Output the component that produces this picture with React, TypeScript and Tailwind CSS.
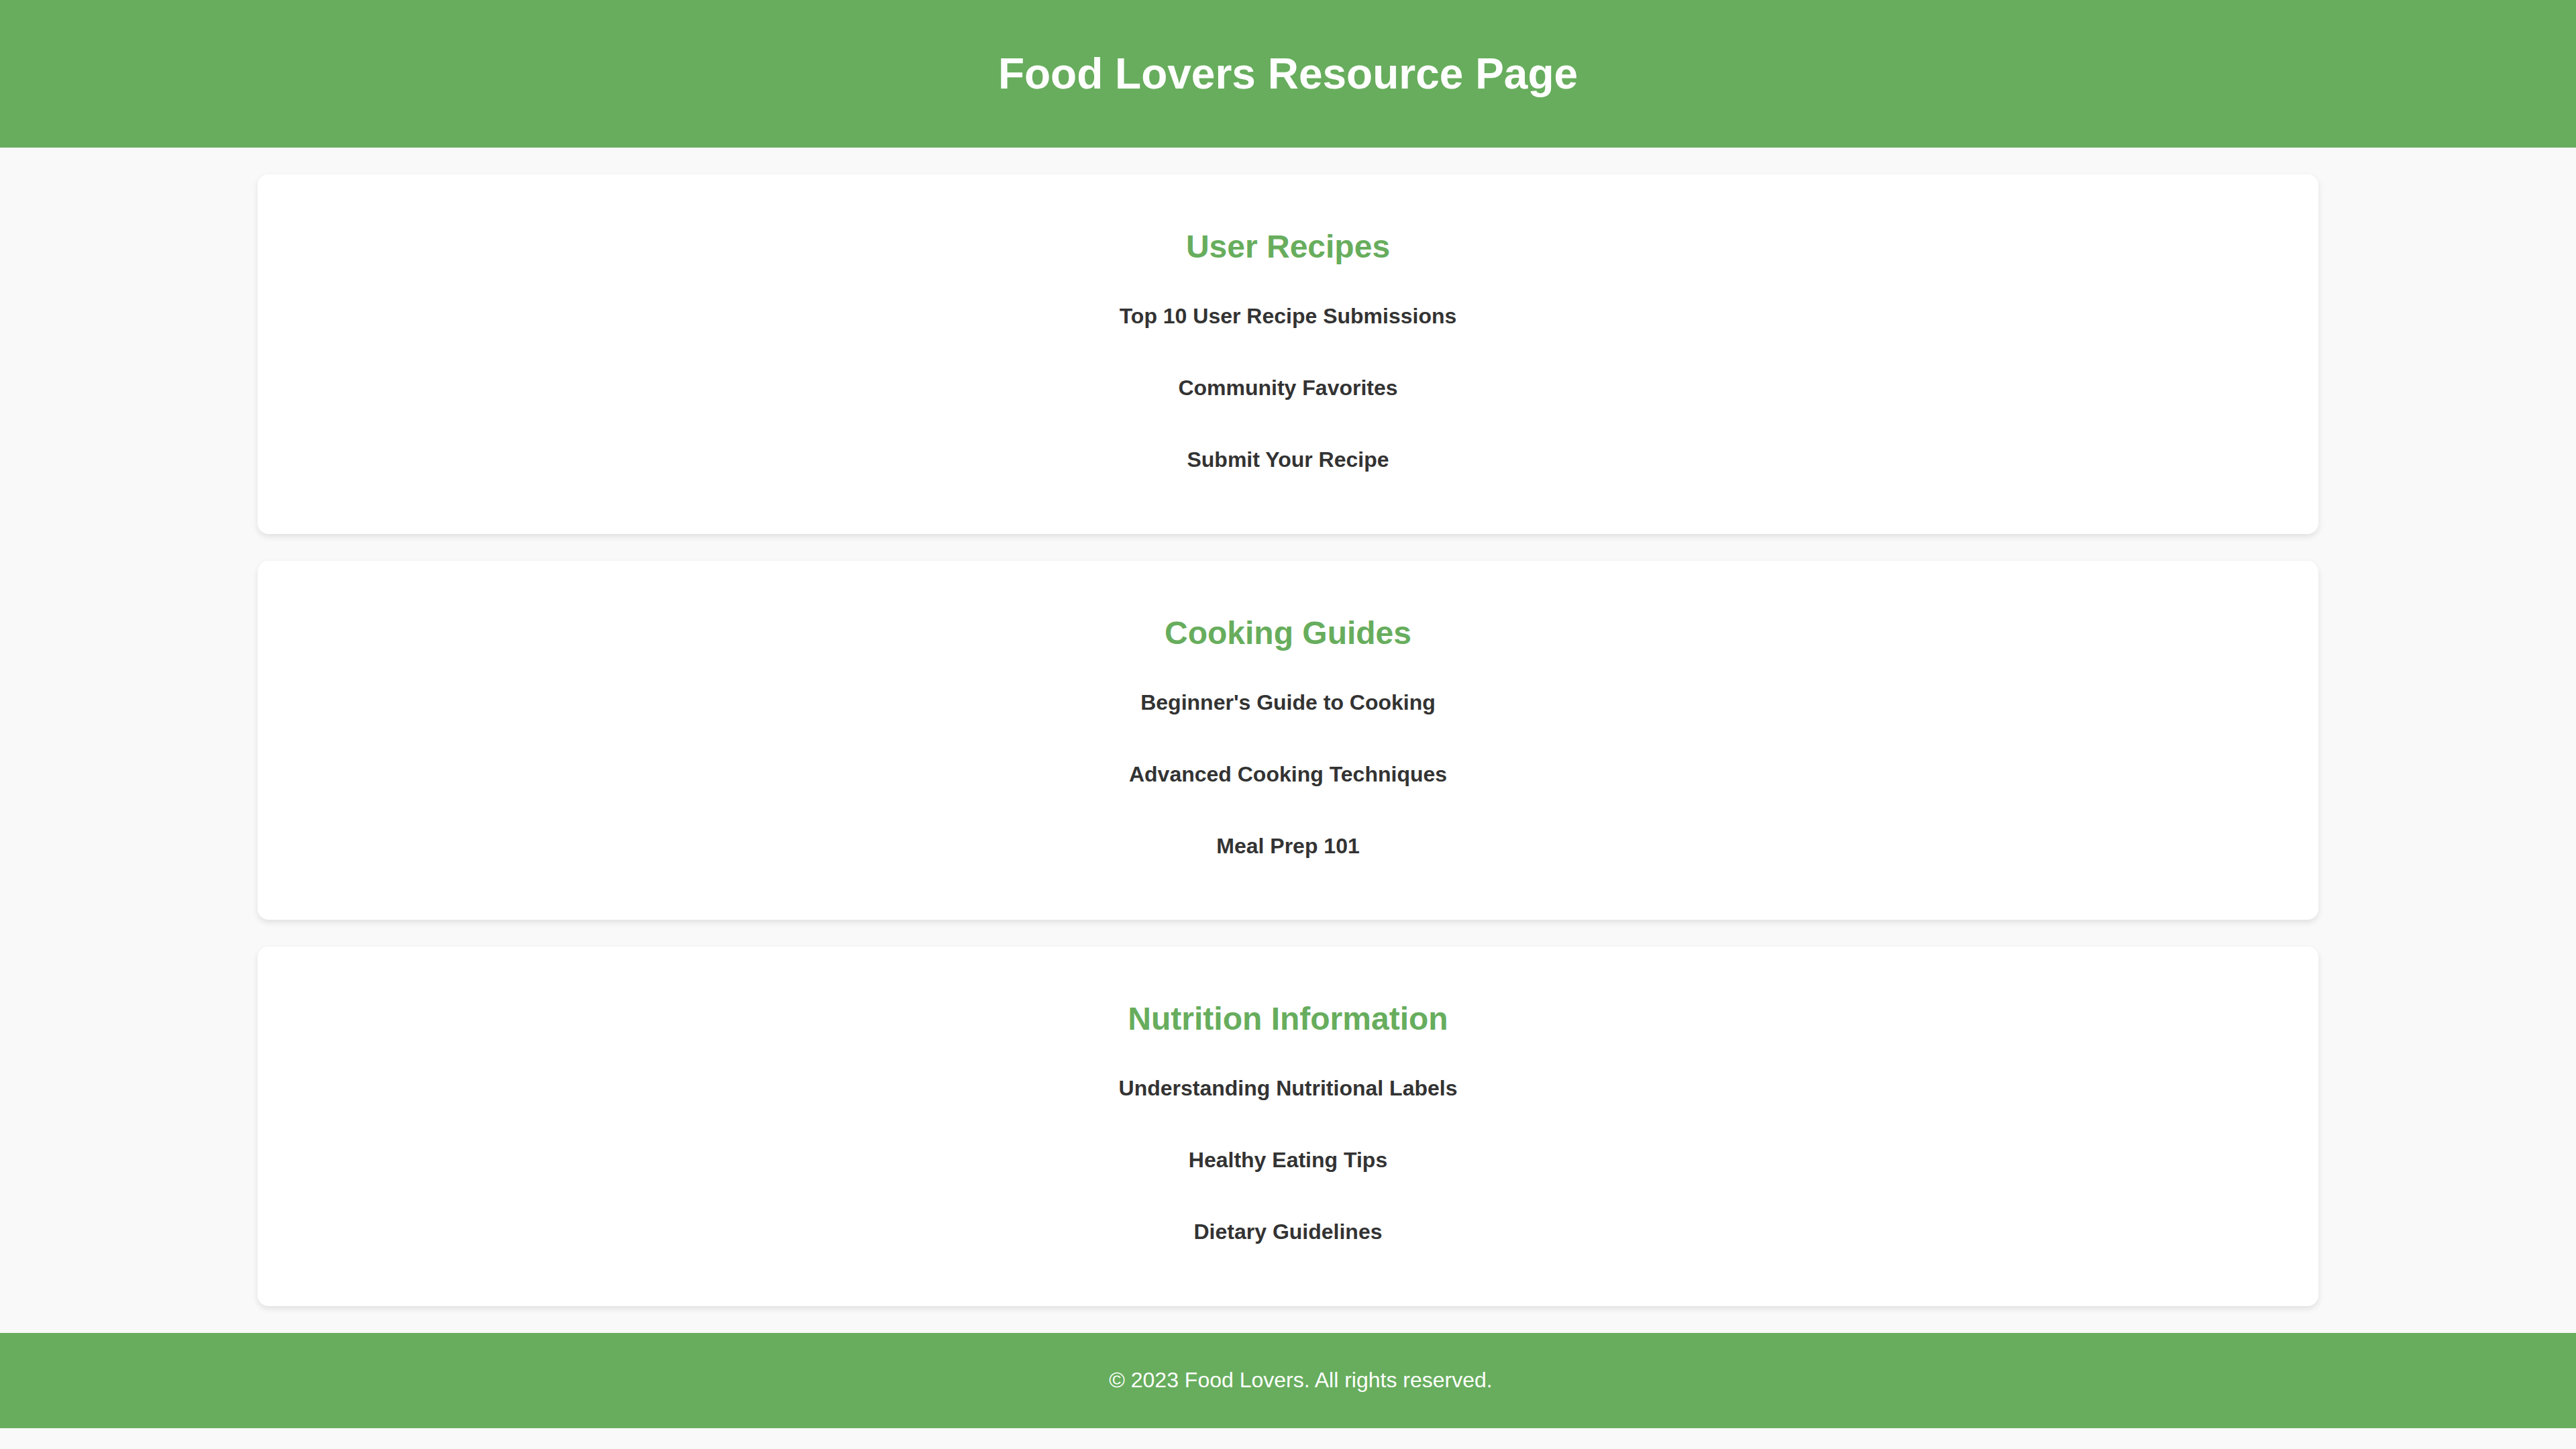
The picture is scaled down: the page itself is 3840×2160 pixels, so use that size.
import React from "react";

interface Section {
  title: string;
  links: string[];
}

const sections: Section[] = [
  {
    title: "User Recipes",
    links: ["Top 10 User Recipe Submissions", "Community Favorites", "Submit Your Recipe"],
  },
  {
    title: "Cooking Guides",
    links: ["Beginner's Guide to Cooking", "Advanced Cooking Techniques", "Meal Prep 101"],
  },
  {
    title: "Nutrition Information",
    links: ["Understanding Nutritional Labels", "Healthy Eating Tips", "Dietary Guidelines"],
  },
];

function ResourceCard({ title, links }: Section) {
  return (
    <section className="w-[80%] mx-auto bg-white rounded-[16px] shadow-[0_4px_10px_rgba(0,0,0,0.1)] px-[40px] pt-[40px] pb-[71.5px] text-center">
      <h2 className="mt-[40px] mb-[38px] text-[48px] leading-[55px] font-bold text-[#67ad5d]">{title}</h2>
      <ul className="flex flex-col gap-[30px]">
        {links.map((link) => (
          <li key={link} className="py-[20px]">
            <a href="#" className="text-[32px] leading-[37px] font-bold text-[#333333]">
              {link}
            </a>
          </li>
        ))}
      </ul>
    </section>
  );
}

export default function App() {
  return (
    <div className="min-h-screen bg-[#f9f9f9] font-['Liberation_Sans',Arial,sans-serif]">
      <header className="h-[220px] bg-[#67ad5d] flex items-center justify-center">
        <h1 className="text-[64px] leading-[74px] font-bold text-white">Food Lovers Resource Page</h1>
      </header>

      <main className="pt-[40px] flex flex-col gap-[40px]">
        {sections.map((s) => (
          <ResourceCard key={s.title} {...s} />
        ))}
      </main>

      <footer className="mt-[40px] h-[142px] bg-[#67ad5d] flex items-center justify-center pl-[38px]">
        <p className="text-[32px] leading-[37px] text-white">© 2023 Food Lovers. All rights reserved.</p>
      </footer>
    </div>
  );
}
